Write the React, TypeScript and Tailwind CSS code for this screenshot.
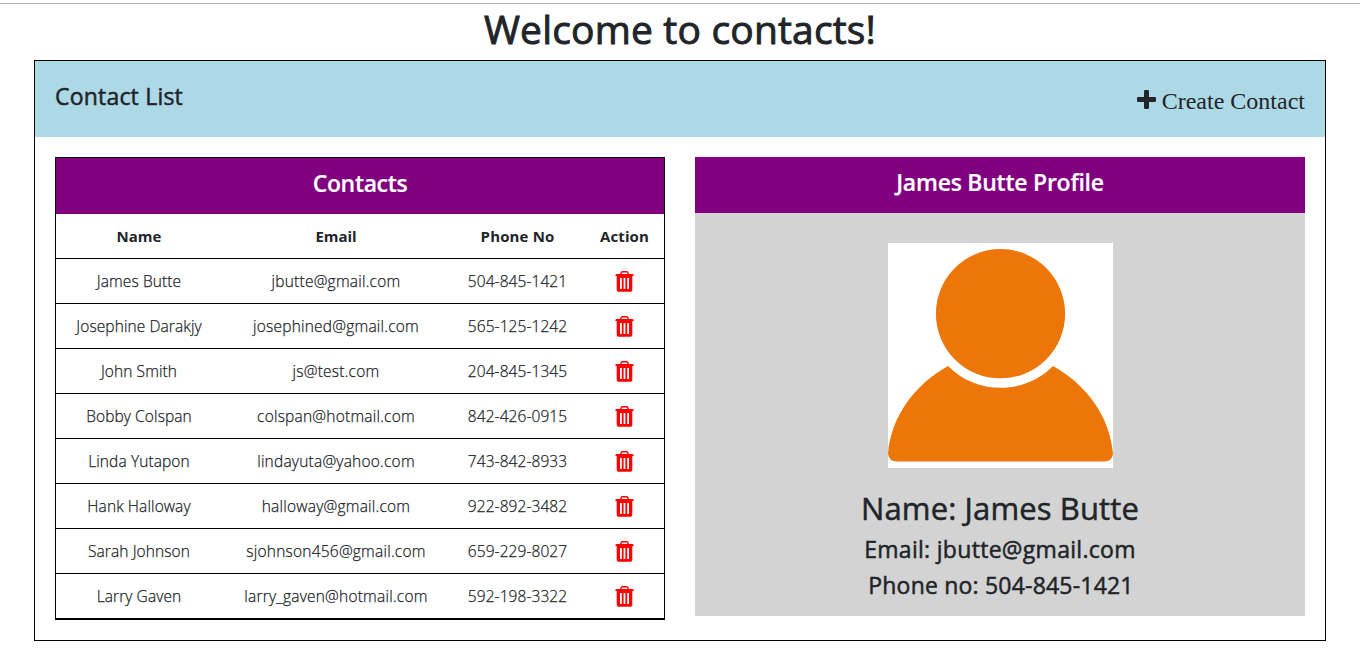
type Contact = { name: string; email: string; phone: string };

const contacts: Contact[] = [
  { name: "James Butte", email: "jbutte@gmail.com", phone: "504-845-1421" },
  { name: "Josephine Darakjy", email: "josephined@gmail.com", phone: "565-125-1242" },
  { name: "John Smith", email: "js@test.com", phone: "204-845-1345" },
  { name: "Bobby Colspan", email: "colspan@hotmail.com", phone: "842-426-0915" },
  { name: "Linda Yutapon", email: "lindayuta@yahoo.com", phone: "743-842-8933" },
  { name: "Hank Halloway", email: "halloway@gmail.com", phone: "922-892-3482" },
  { name: "Sarah Johnson", email: "sjohnson456@gmail.com", phone: "659-229-8027" },
  { name: "Larry Gaven", email: "larry_gaven@hotmail.com", phone: "592-198-3322" },
];

function TrashIcon() {
  return (
    <svg className="mx-auto block" width="19" height="21" viewBox="0 0 19 21" fill="none">
      <path d="M5.500 3.600 L6.300 1.500 Q6.600 .8 7.400 .8 H11.600 Q12.400 .8 12.700 1.500 L13.500 3.600" stroke="#f00" strokeWidth="1.400" />
      <path d="M.3 4.400 Q.5 3 2 3 H17 Q18.500 3 18.700 4.400 V5 H.3 Z" fill="#f00" />
      <path
        fillRule="evenodd"
        d="M1.700 4.500 H17.300 V18.200 Q17.300 20.800 14.800 20.800 H4.200 Q1.700 20.800 1.700 18.200 Z M5 7 V18 H6.800 V7 Z M8.600 7 V18 H10.400 V7 Z M12.200 7 V18 H14 V7 Z"
        fill="#f00"
      />
    </svg>
  );
}

function PlusIcon() {
  return (
    <svg width="19" height="19" viewBox="0 0 19 19" fill="#212529">
      <rect x="7" y="0" width="5" height="19" rx="1.200" />
      <rect x="0" y="7" width="19" height="5" rx="1.200" />
    </svg>
  );
}

function Avatar() {
  return (
    <svg className="block bg-white" width="225" height="225" viewBox="0 0 225 225" fill="#ec7607">
      <circle cx="112.500" cy="70.700" r="64.600" />
      <path d="M60 123 C88 152 137 152 165 123 C199 142 222 174 225 211 Q224 218.500 216 218.500 H9 Q1 218.500 0 211 C3 174 26 142 60 123 Z" />
    </svg>
  );
}

function ContactTable() {
  return (
    <section className="w-[610px] border border-black">
      <h4 className="flex h-14 items-center justify-center bg-[#800080] pb-1.5 text-[23px] font-semibold leading-7 tracking-[-0.35px] text-white [-webkit-text-stroke:0.2px_white]">
        Contacts
      </h4>
      <table className="w-full table-fixed border-collapse text-center text-[15.5px] leading-6">
        <colgroup>
          <col className="w-[166px]" />
          <col className="w-[228px]" />
          <col className="w-[135px]" />
          <col className="w-[79px]" />
        </colgroup>
        <thead>
          <tr className="h-[44.5px] border-b border-black text-[15px] font-bold">
            <th>Name</th>
            <th className="tracking-[-0.1px]">Email</th>
            <th className="tracking-[0.15px]">Phone No</th>
            <th className="tracking-[0.1px]">Action</th>
          </tr>
        </thead>
        <tbody>
          {contacts.map((c) => (
            <tr
              key={c.email}
              className="h-[45px] border-b border-black font-light [-webkit-text-stroke:0.25px_#212529]"
            >
              <td className="tracking-[0.1px]">{c.name}</td>
              <td className="tracking-[0.22px]">{c.email}</td>
              <td className="tracking-[0.08px]">{c.phone}</td>
              <td><TrashIcon /></td>
            </tr>
          ))}
        </tbody>
      </table>
    </section>
  );
}

function Profile({ contact }: { contact: Contact }) {
  return (
    <section className="flex h-[459px] w-[610px] flex-col items-center bg-[#d3d3d3]">
      <h4 className="flex h-14 w-full items-center justify-center bg-[#800080] pb-1.5 text-[23px] font-semibold leading-7 tracking-[-0.25px] text-white [-webkit-text-stroke:0.2px_white]">
        {contact.name} Profile
      </h4>
      <div className="mt-[30px]">
        <Avatar />
      </div>
      <div className="flex flex-col items-center gap-2 pt-[21px] [-webkit-text-stroke:0.5px_#212529]">
        <h2 className="text-[31px] leading-[38px] tracking-[0.12px]">Name: {contact.name}</h2>
        <h4 className="text-[23px] leading-7 tracking-[0.3px]">Email: {contact.email}</h4>
        <h4 className="pl-0.5 text-[23px] leading-7 tracking-[0.2px]">Phone no: {contact.phone}</h4>
      </div>
    </section>
  );
}

export default function App() {
  return (
    <div className="h-[660px] overflow-hidden bg-white pt-[3px] font-['Open_Sans','Noto_Sans',sans-serif] text-[#212529]">
      <div className="h-px bg-[#b0b0b0]" />
      <h1 className="flex h-14 items-center justify-center pb-1.5 text-[39px] leading-[48px] tracking-[0.18px] [-webkit-text-stroke:0.9px_#212529]">
        Welcome to contacts!
      </h1>
      <main className="mx-[34px] h-[581px] border border-black">
        <header className="flex h-[76px] items-center justify-between bg-[#add8e6] px-5">
          <h4 className="pb-1.5 text-[23px] leading-7 tracking-[0.2px] [-webkit-text-stroke:0.5px_#212529]">Contact List</h4>
          <button className="flex items-center gap-1.5 pt-1 font-['Liberation_Serif',serif] text-2xl leading-7">
            <span className="pb-[3px]"><PlusIcon /></span>
            <span>Create Contact</span>
          </button>
        </header>
        <div className="flex items-start justify-between p-5">
          <ContactTable />
          <Profile contact={contacts[0]} />
        </div>
      </main>
    </div>
  );
}
